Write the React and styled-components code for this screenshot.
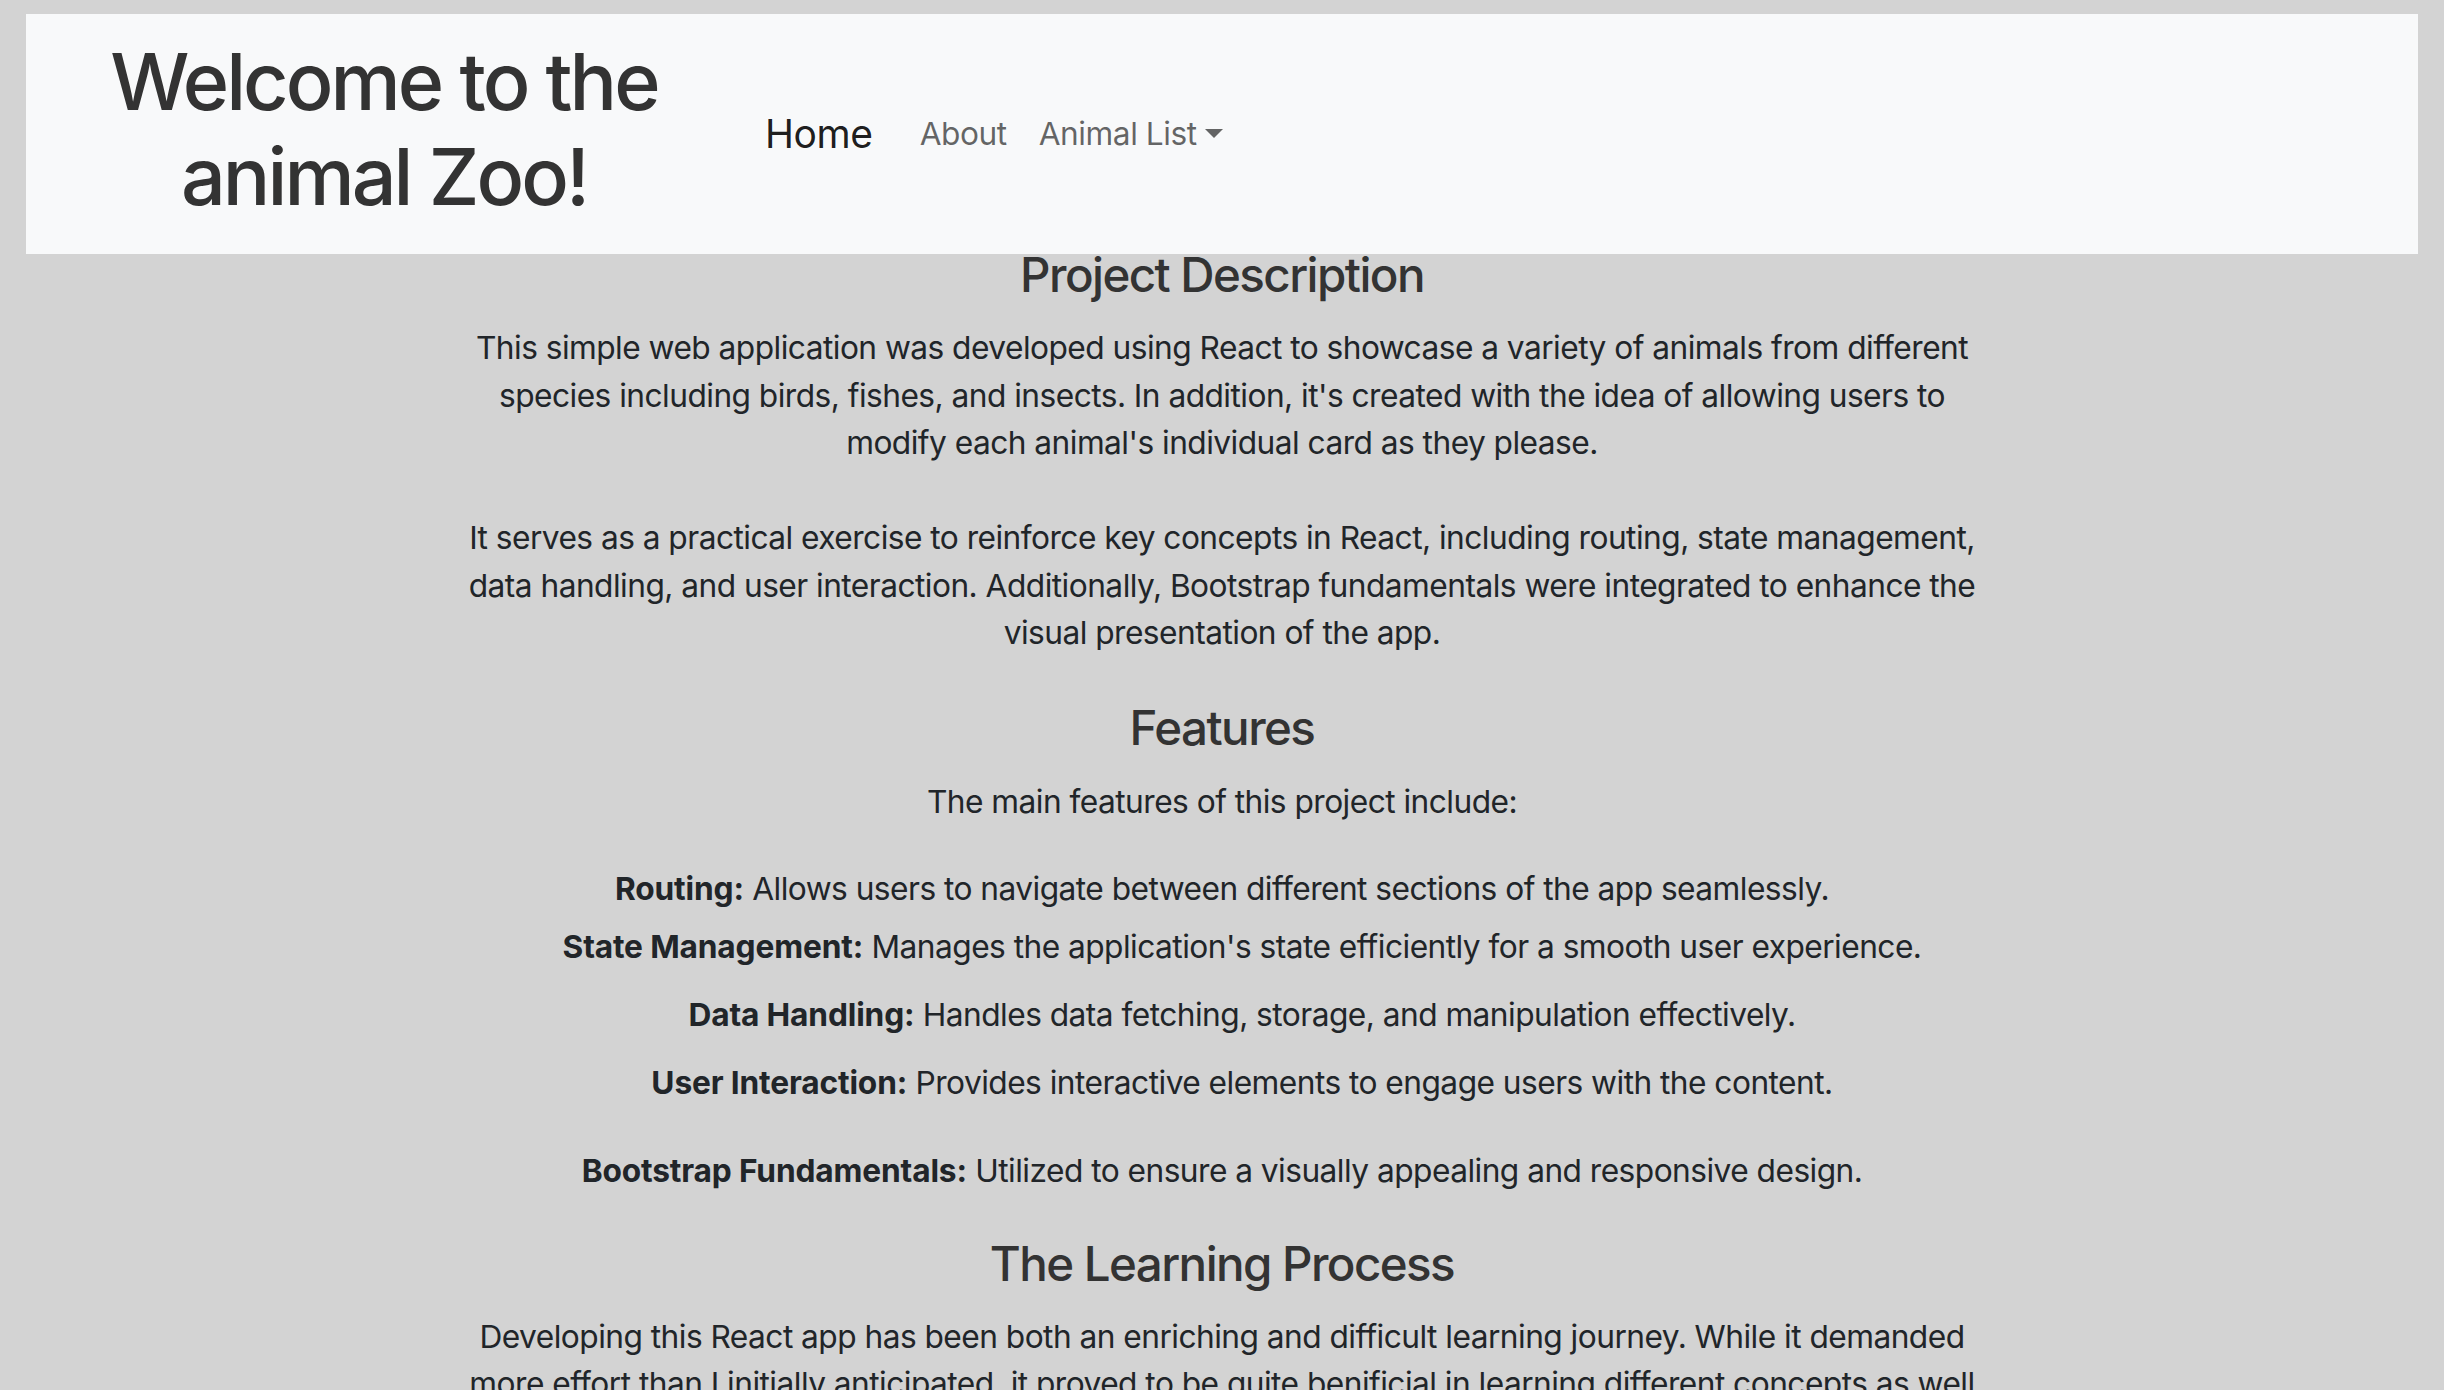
import React from "react";
import styled, { createGlobalStyle } from "styled-components";

const Global = createGlobalStyle`
  html, body {
    margin: 0;
    background: #d3d3d3;
  }
  body {
    font-family: Inter, "Noto Sans", "Liberation Sans", sans-serif;
    color: #212529;
    overflow: hidden;
  }
`;

const Page = styled.div`
  padding: 14px 26px 0;
`;

const Navbar = styled.nav`
  height: 240px;
  background: #f8f9fa;
  display: flex;
  align-items: center;
`;

const Brand = styled.h1`
  width: 664px;
  margin: 0 0 10px 26px;
  font-size: 79px;
  line-height: 95px;
  font-weight: 500;
  letter-spacing: -0.037em;
  color: #333;
  text-align: center;
`;

const NavList = styled.ul`
  list-style: none;
  display: flex;
  align-items: center;
  margin: 0 0 0 33px;
  padding: 0;
`;

const HomeLink = styled.a`
  font-size: 39px;
  line-height: 58px;
  letter-spacing: -0.01em;
  color: rgba(0, 0, 0, 0.9);
  margin-right: 15px;
  padding: 0 16px;
  text-decoration: none;
`;

const NavLink = styled.a`
  font-size: 31.7px;
  line-height: 47.5px;
  letter-spacing: -0.015em;
  color: rgba(0, 0, 0, 0.6);
  padding: 0 16px;
  text-decoration: none;
  display: inline-flex;
  align-items: center;
`;

const Caret = styled.span`
  display: inline-block;
  margin-left: 8px;
  width: 0;
  height: 0;
  border-left: 9px solid transparent;
  border-right: 9px solid transparent;
  border-top: 9px solid currentColor;
  transform: translateY(-1px);
`;

const Main = styled.main`
  display: flex;
  flex-direction: column;
  align-items: center;
  text-align: center;
  padding-top: 1px;
`;

const Heading = styled.h2`
  font-size: 47.5px;
  line-height: 40px;
  font-weight: 500;
  letter-spacing: -0.033em;
  color: #333;
  margin: ${(p) => p.$top}px 0 ${(p) => p.$bottom}px;
`;

const Para = styled.p`
  max-width: 1540px;
  font-size: 31.7px;
  line-height: 47.5px;
  letter-spacing: -0.017em;
  margin: 0;
`;

const Feature = styled.p`
  font-size: 31.7px;
  line-height: 47.5px;
  letter-spacing: -0.017em;
  margin: ${(p) => p.$top}px 0 0;
  padding-left: ${(p) => (p.$indent ? 40 : 0)}px;
`;

const Label = styled.strong`
  font-weight: 700;
  letter-spacing: -0.005em;
`;

const features = [
  { label: "Routing:", text: "Allows users to navigate between different sections of the app seamlessly.", top: 40 },
  { label: "State Management:", text: "Manages the application's state efficiently for a smooth user experience.", top: 10, indent: true },
  { label: "Data Handling:", text: "Handles data fetching, storage, and manipulation effectively.", top: 21, indent: true },
  { label: "User Interaction:", text: "Provides interactive elements to engage users with the content.", top: 20, indent: true },
  { label: "Bootstrap Fundamentals:", text: "Utilized to ensure a visually appealing and responsive design.", top: 41 },
];

export default function App() {
  return (
    <>
      <Global />
      <Page>
        <Navbar>
          <Brand>
            Welcome to the
            <br />
            animal Zoo!
          </Brand>
          <NavList>
            <li>
              <HomeLink href="#">Home</HomeLink>
            </li>
            <li>
              <NavLink href="#">About</NavLink>
            </li>
            <li>
              <NavLink href="#">
                Animal List
                <Caret />
              </NavLink>
            </li>
          </NavList>
        </Navbar>
        <Main>
          <Heading $top={0} $bottom={29}>Project Description</Heading>
          <Para>
            This simple web application was developed using React to showcase a variety of animals from different
            species including birds, fishes, and insects. In addition, it's created with the idea of allowing users to
            modify each animal's individual card as they please.
            <br />
            <br />
            It serves as a practical exercise to reinforce key concepts in React, including routing, state management,
            data handling, and user interaction. Additionally, Bootstrap fundamentals were integrated to enhance the
            visual presentation of the app.
          </Para>
          <Heading $top={51} $bottom={30}>Features</Heading>
          <Para>The main features of this project include:</Para>
          {features.map((f) => (
            <Feature key={f.label} $top={f.top} $indent={f.indent}>
              <Label>{f.label}</Label> {f.text}
            </Feature>
          ))}
          <Heading $top={49} $bottom={29}>The Learning Process</Heading>
          <Para>
            Developing this React app has been both an enriching and difficult learning journey. While it demanded
            more effort than I initially anticipated, it proved to be quite benificial in learning different concepts as well
            as how to apply them in a practical, hands-on setting.
          </Para>
        </Main>
      </Page>
    </>
  );
}
